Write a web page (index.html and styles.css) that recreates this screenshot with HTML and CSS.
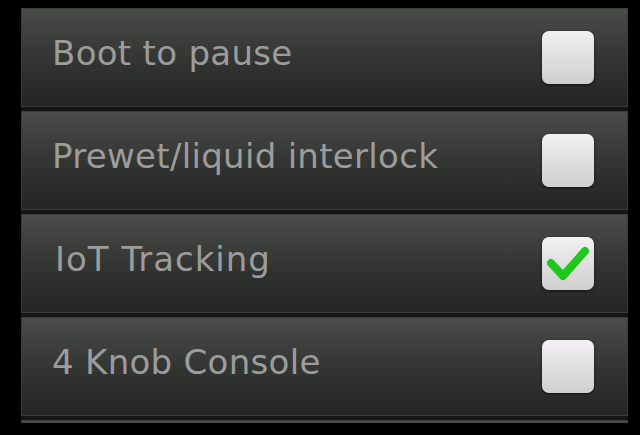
FILE: index.html
```html
<!DOCTYPE html>
<html lang="en">
	<head>
		<meta charset="UTF-8" />
		<meta name="viewport" content="width=device-width, initial-scale=1.0" />
		<title>Settings</title>
		<link rel="stylesheet" href="styles.css">
	</head>
	<body>
		<div class="settings">
			<div class="row">
				<span class="label">Boot to pause</span>
				<span class="checkbox"></span>
			</div>
			<div class="row">
				<span class="label">Prewet/liquid interlock</span>
				<span class="checkbox"></span>
			</div>
			<div class="row">
				<span class="label iot">IoT Tracking</span>
				<span class="checkbox checked">
					<svg viewBox="0 0 52 53" width="52" height="53">
						<path d="M9 26 L21 39 L43 14" fill="none" stroke="#1ec81e" stroke-width="8" stroke-linecap="round" stroke-linejoin="round" />
					</svg>
				</span>
			</div>
			<div class="row">
				<span class="label">4 Knob Console</span>
				<span class="checkbox"></span>
			</div>
			<div class="row"></div>
		</div>
	</body>
</html>
```

FILE: styles.css
```css
body {
	margin: 0;
	background-color: #000;
	font-family: "DejaVu Sans", sans-serif;
}
.settings {
	margin: 8px 12px 0 21px;
	height: 415px;
	overflow: hidden;
	display: flex;
	flex-direction: column;
	gap: 4px;
	background-color: #141514;
}
.row {
	flex: 0 0 99px;
	box-sizing: border-box;
	display: flex;
	align-items: center;
	justify-content: space-between;
	padding: 0 33px 0 30px;
	border: 1px solid #3a3d3a;
	background: linear-gradient(to bottom, #494c49 0%, #353835 45%, #232423 100%);
}
.label {
	font-size: 34px;
	color: #9c9c9c;
	letter-spacing: 0.3px;
	margin-top: -9px;
}
.label.iot {
	margin-left: 3px;
	letter-spacing: 1px;
}
.checkbox {
	width: 52px;
	height: 53px;
	border-radius: 7px;
	background: linear-gradient(to bottom, #f2f0f2, #cfcfcf);
	box-shadow: 0 1px 3px rgba(0, 0, 0, 0.6);
}
.checkbox svg {
	display: block;
}
```
